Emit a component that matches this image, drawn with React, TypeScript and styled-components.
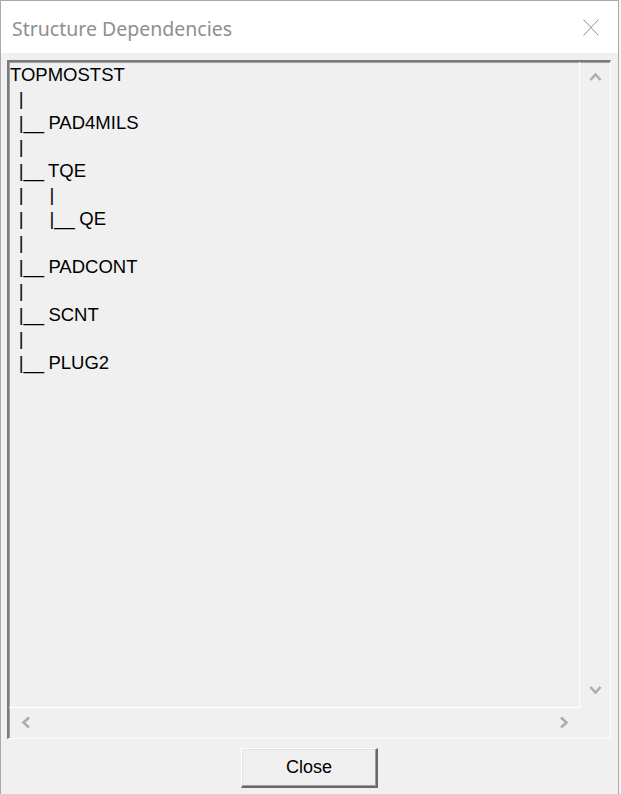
import styled, { createGlobalStyle } from "styled-components";

const GlobalStyle = createGlobalStyle`
  html, body {
    margin: 0;
    padding: 0;
    background: #f4f4f4;
  }
`;

const tree = [
  "TOPMOSTST",
  "  |",
  "  |__ PAD4MILS",
  "  |",
  "  |__ TQE",
  "  |      |",
  "  |      |__ QE",
  "  |",
  "  |__ PADCONT",
  "  |",
  "  |__ SCNT",
  "  |",
  "  |__ PLUG2",
];

type Dir = "up" | "down" | "left" | "right";

const chevronPaths: Record<Dir, string> = {
  up: "M1.5 8 L6.5 2.5 L11.5 8",
  down: "M1.5 2 L6.5 7.5 L11.5 2",
  left: "M8 1.5 L2.5 6.5 L8 11.5",
  right: "M2 1.5 L7.5 6.5 L2 11.5",
};

function Chevron({ dir }: { dir: Dir }) {
  const vertical = dir === "up" || dir === "down";
  return (
    <svg
      width={vertical ? 13 : 10}
      height={vertical ? 10 : 13}
      viewBox={vertical ? "0 0 13 10" : "0 0 10 13"}
    >
      <path d={chevronPaths[dir]} fill="none" stroke="#adadad" strokeWidth="2.6" />
    </svg>
  );
}

function App() {
  return (
    <>
      <GlobalStyle />
      <Window>
        <TitleBar>
          <Title>Structure Dependencies</Title>
          <CloseX>
            <svg width="16" height="17" viewBox="0 0 16 17">
              <path d="M0.5 0.5 L15.5 16.5 M15.5 0.5 L0.5 16.5" stroke="#8e8e8e" strokeWidth="1" fill="none" />
            </svg>
          </CloseX>
        </TitleBar>
        <Body>
          <ListBox>
            <TreeView>
              {tree.map((line, i) => (
                <TreeLine key={i}>{line}</TreeLine>
              ))}
            </TreeView>
            <VScroll>
              <Chevron dir="up" />
              <Chevron dir="down" />
            </VScroll>
            <HScroll>
              <Chevron dir="left" />
              <Chevron dir="right" />
            </HScroll>
            <Corner />
          </ListBox>
          <Footer>
            <Button>Close</Button>
          </Footer>
        </Body>
      </Window>
    </>
  );
}

const Window = styled.div`
  width: 617px;
  height: 793px;
  border: 1px solid #a9a9a9;
  border-bottom: none;
  display: flex;
  flex-direction: column;
  background: #f0f0f0;
`;

const TitleBar = styled.div`
  height: 52px;
  flex: none;
  background: #ffffff;
  display: flex;
  align-items: center;
  padding: 0 19px 0 11px;
`;

const Title = styled.div`
  font-family: "Noto Sans", "Open Sans", sans-serif;
  font-size: 19.5px;
  color: #8f8f8f;
  margin-top: 3px;
`;

const CloseX = styled.div`
  margin-left: auto;
  display: flex;
  margin-top: 1px;
`;

const Body = styled.div`
  flex: 1;
  display: flex;
  flex-direction: column;
  padding: 7px 7px 0 6px;
`;

const ListBox = styled.div`
  height: 676px;
  flex: none;
  display: grid;
  grid-template-columns: 1fr 30px;
  grid-template-rows: 1fr 30px;
  border-top: 2px solid #7a7a7a;
  border-left: 2px solid #7a7a7a;
  border-right: 1px solid #fbfbfb;
  border-bottom: 1px solid #fbfbfb;
  box-shadow: inset 1px 1px 0 #a0a0a0;
`;

const TreeView = styled.div`
  border-right: 1px solid #ffffff;
  border-bottom: 1px solid #ffffff;
  padding: 1px 0 0 1px;
  overflow: hidden;
`;

const TreeLine = styled.div`
  font-family: "Liberation Sans", Arial, sans-serif;
  font-size: 18.5px;
  line-height: 24px;
  height: 24px;
  color: #000000;
  white-space: pre;
  word-spacing: -0.8px;
`;

const VScroll = styled.div`
  display: flex;
  flex-direction: column;
  justify-content: space-between;
  align-items: center;
  padding: 10px 0 13px 1px;
`;

const HScroll = styled.div`
  display: flex;
  justify-content: space-between;
  align-items: center;
  padding: 0 11px 1px 12px;
`;

const Corner = styled.div``;

const Footer = styled.div`
  display: flex;
  justify-content: center;
  padding-top: 9px;
`;

const Button = styled.div`
  width: 134px;
  height: 37px;
  display: flex;
  align-items: center;
  justify-content: center;
  font-family: "Liberation Sans", Arial, sans-serif;
  font-size: 18px;
  color: #000000;
  background: #f0f0f0;
  border-top: 1px solid #ffffff;
  border-left: 1px solid #ffffff;
  border-right: 2px solid #696969;
  border-bottom: 2px solid #696969;
  box-shadow: inset -1px -1px 0 #a0a0a0, inset 1px 1px 0 #e3e3e3;
  margin-left: 1px;
`;

export default App;
